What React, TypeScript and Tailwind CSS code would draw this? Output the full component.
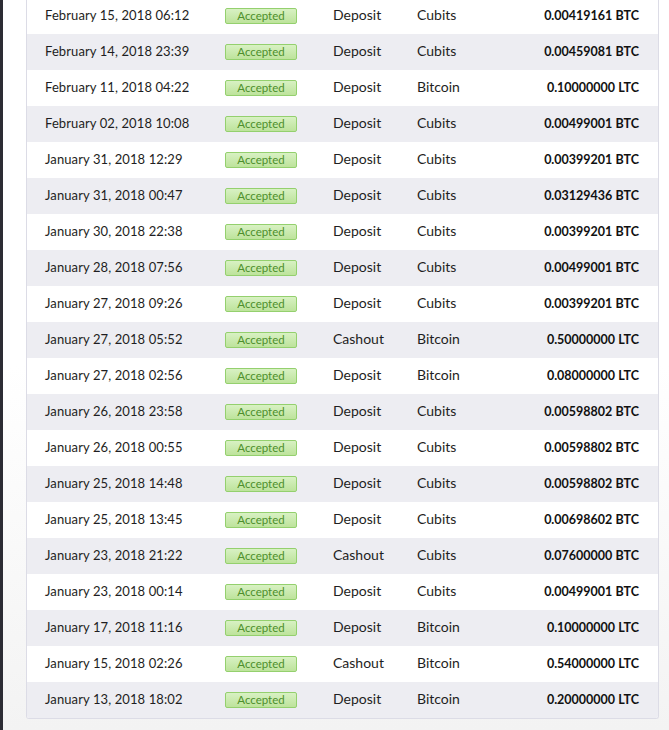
const rows: [string, string, string, string][] = [
  ["February 15, 2018 06:12", "Deposit", "Cubits", "0.00419161 BTC"],
  ["February 14, 2018 23:39", "Deposit", "Cubits", "0.00459081 BTC"],
  ["February 11, 2018 04:22", "Deposit", "Bitcoin", "0.10000000 LTC"],
  ["February 02, 2018 10:08", "Deposit", "Cubits", "0.00499001 BTC"],
  ["January 31, 2018 12:29", "Deposit", "Cubits", "0.00399201 BTC"],
  ["January 31, 2018 00:47", "Deposit", "Cubits", "0.03129436 BTC"],
  ["January 30, 2018 22:38", "Deposit", "Cubits", "0.00399201 BTC"],
  ["January 28, 2018 07:56", "Deposit", "Cubits", "0.00499001 BTC"],
  ["January 27, 2018 09:26", "Deposit", "Cubits", "0.00399201 BTC"],
  ["January 27, 2018 05:52", "Cashout", "Bitcoin", "0.50000000 LTC"],
  ["January 27, 2018 02:56", "Deposit", "Bitcoin", "0.08000000 LTC"],
  ["January 26, 2018 23:58", "Deposit", "Cubits", "0.00598802 BTC"],
  ["January 26, 2018 00:55", "Deposit", "Cubits", "0.00598802 BTC"],
  ["January 25, 2018 14:48", "Deposit", "Cubits", "0.00598802 BTC"],
  ["January 25, 2018 13:45", "Deposit", "Cubits", "0.00698602 BTC"],
  ["January 23, 2018 21:22", "Cashout", "Cubits", "0.07600000 BTC"],
  ["January 23, 2018 00:14", "Deposit", "Cubits", "0.00499001 BTC"],
  ["January 17, 2018 11:16", "Deposit", "Bitcoin", "0.10000000 LTC"],
  ["January 15, 2018 02:26", "Cashout", "Bitcoin", "0.54000000 LTC"],
  ["January 13, 2018 18:02", "Deposit", "Bitcoin", "0.20000000 LTC"],
];

export default function App() {
  return (
    <div className="flex h-[730px] w-[669px] overflow-hidden bg-gradient-to-b from-white via-white to-[#f3f3f3] font-['Lato',sans-serif] text-[14px] text-[#1e1e22]">
      {/* dark sidebar edge */}
      <div className="w-[3px] shrink-0 bg-[#2c2c34]" />

      <div className="ml-[23px] mr-[10px] flex-1">
        <div className="-mt-[2px] overflow-hidden rounded-b-[3px] border-x border-b border-[#dcdce6] bg-white">
          {rows.map(([date, type, method, amount], i) => (
            <div
              key={i}
              className={`grid h-[36px] grid-cols-[180px_108px_84px_1fr_auto] items-baseline pl-[18px] pr-[19px] leading-[34px] ${
                i % 2 === 1 ? "bg-[#ededf2]" : "bg-white"
              }`}
            >
              <span className="text-[13px] tracking-[0.1px]">{date}</span>
              <span className="inline-block w-[72px] rounded-[2px] border border-[#94d06e] bg-gradient-to-b from-[#d8f1c3] to-[#bde39b] text-center text-[11.5px] leading-[14px] text-[#4d8f2c]">
                Accepted
              </span>
              <span>{type}</span>
              <span>{method}</span>
              <span className="text-[12.5px] font-bold text-[#111]">{amount}</span>
            </div>
          ))}
        </div>
      </div>
    </div>
  );
}
